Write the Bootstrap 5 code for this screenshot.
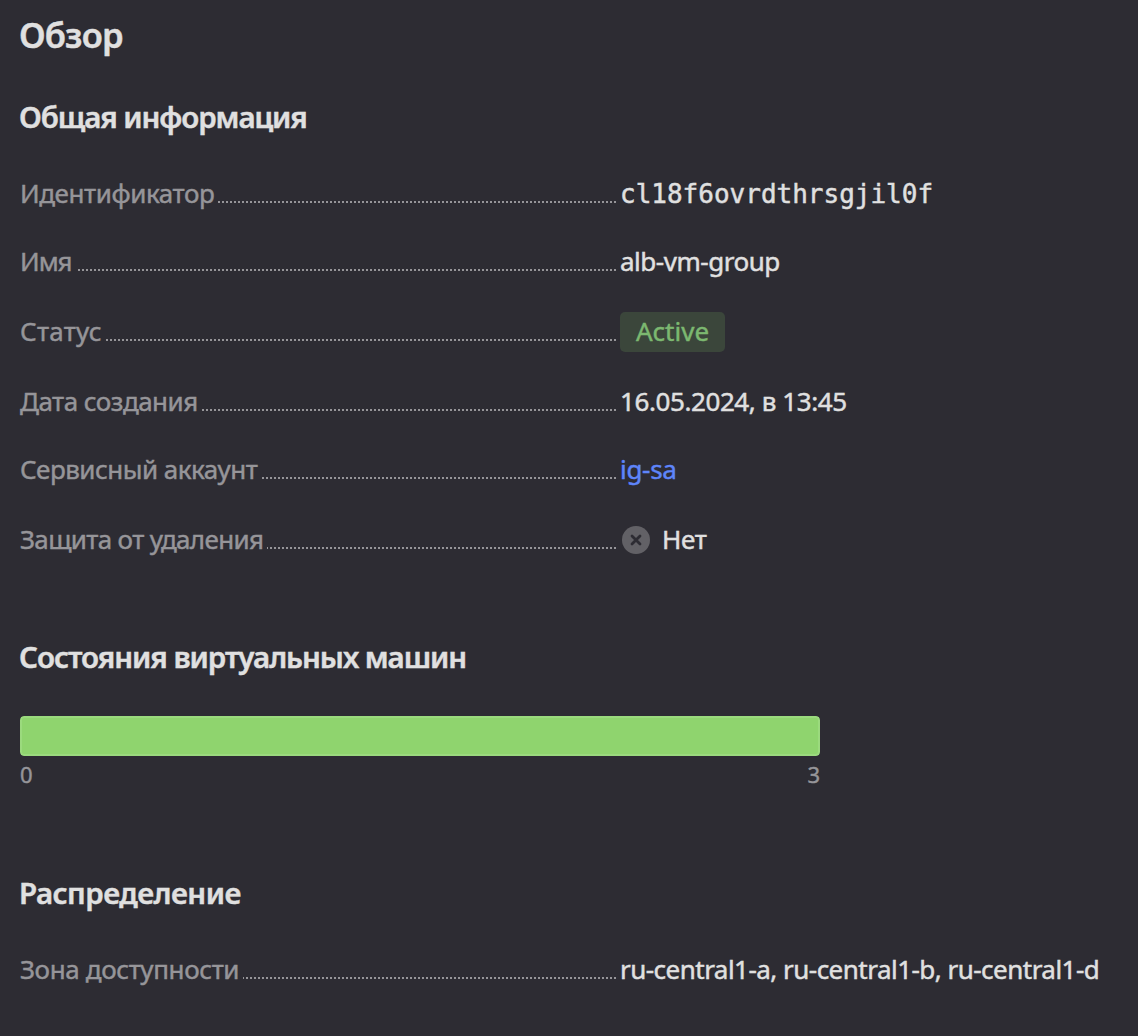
<!DOCTYPE html>
<html lang="ru">
<head>
<meta charset="utf-8">
<meta name="viewport" content="width=device-width, initial-scale=1">
<title>Обзор</title>
<link href="https://cdn.jsdelivr.net/npm/bootstrap@5.3.0/dist/css/bootstrap.min.css" rel="stylesheet">
<style>
body { background: #2d2c33; color: #e0e0e0; font-family: "Noto Sans", sans-serif; font-size: 26px; font-weight: 400; line-height: 36px; -webkit-text-stroke: .45px; }
.page { padding: 11px 20px 0; white-space: nowrap; }
.page-title { font-size: 34.5px; line-height: 48px; font-weight: 600; margin: 0 0 38px -1px; letter-spacing: -.85px; }
.section-title { font-size: 29.5px; line-height: 40px; font-weight: 600; margin: 0 0 38px -1px; }
.t-general { letter-spacing: -1.08px; }
.t-states { letter-spacing: -1.05px; margin-bottom: 39px; }
.t-distribution { letter-spacing: -.52px; }
.info-list { gap: 32px; }
.info-row { height: 36px; }
.info-row.tall { height: 40px; line-height: 40px; }
.info-term { width: 596px; margin-right: 4px; color: #969599; font-weight: 400; }
.leader { height: 2px; margin: 0 0 8px 4px; background: repeating-linear-gradient(to left, #969599 0 2px, transparent 2px 4px); }
.tall .leader { margin-bottom: 10px; }
.mono { font-family: "DejaVu Sans Mono", monospace; line-height: 38px; }
.status-label { height: 40px; line-height: 38px; margin-top: 1px; padding: 0 16px; border-radius: 5px; background: #3b463b; color: #7cb870; }
.sa-link { color: #5e85fa; }
.no-icon { width: 28px; height: 28px; margin: 7px 12px 0 2px; }
.k-id { letter-spacing: -.42px; }
.k-name { letter-spacing: -1px; }
.k-status { letter-spacing: .25px; }
.k-date { letter-spacing: -.53px; }
.k-account { letter-spacing: -.52px; }
.k-protect { letter-spacing: -.66px; }
.k-zone { letter-spacing: -.38px; }
.v-name { letter-spacing: -.48px; }
.v-date { letter-spacing: -.41px; }
.v-account { letter-spacing: -.3px; }
.v-no { letter-spacing: -.3px; }
.v-zones { letter-spacing: -.52px; }
.states { width: 800px; margin-bottom: 83px; }
.states .progress { height: 40px; border-radius: 4px; background: transparent; }
.states .progress-bar { background: #8fd46e; border: 2px solid #9bda7e; border-radius: 4px; }
.scale { margin: 3px 0 0; padding-bottom: 1px; font-size: 22px; line-height: 30px; color: #969599; }
.info-block { margin-bottom: 78px; }
</style>
</head>
<body>
<main class="page">
  <h1 class="page-title">Обзор</h1>

  <section class="info-block">
    <h2 class="section-title t-general">Общая информация</h2>
    <dl class="info-list d-flex flex-column mb-0">
      <div class="info-row d-flex">
        <dt class="info-term d-flex"><span class="k-id">Идентификатор</span><span class="leader flex-grow-1 align-self-end"></span></dt>
        <dd class="mono mb-0">cl18f6ovrdthrsgjil0f</dd>
      </div>
      <div class="info-row d-flex">
        <dt class="info-term d-flex"><span class="k-name">Имя</span><span class="leader flex-grow-1 align-self-end"></span></dt>
        <dd class="v-name mb-0">alb-vm-group</dd>
      </div>
      <div class="info-row tall d-flex">
        <dt class="info-term d-flex"><span class="k-status">Статус</span><span class="leader flex-grow-1 align-self-end"></span></dt>
        <dd class="status-label mb-0">Active</dd>
      </div>
      <div class="info-row d-flex">
        <dt class="info-term d-flex"><span class="k-date">Дата создания</span><span class="leader flex-grow-1 align-self-end"></span></dt>
        <dd class="v-date mb-0">16.05.2024, в 13:45</dd>
      </div>
      <div class="info-row d-flex">
        <dt class="info-term d-flex"><span class="k-account">Сервисный аккаунт</span><span class="leader flex-grow-1 align-self-end"></span></dt>
        <dd class="v-account mb-0"><a class="sa-link text-decoration-none" href="#">ig-sa</a></dd>
      </div>
      <div class="info-row tall d-flex">
        <dt class="info-term d-flex"><span class="k-protect">Защита от удаления</span><span class="leader flex-grow-1 align-self-end"></span></dt>
        <dd class="v-no d-flex mb-0">
          <svg class="no-icon" viewBox="0 0 28 28" aria-hidden="true"><circle cx="14" cy="14" r="14" fill="#626166"/><path d="M10 10l8 8M18 10l-8 8" fill="none" stroke="#2d2c33" stroke-width="2.8" stroke-linecap="round"/></svg>
          <span>Нет</span>
        </dd>
      </div>
    </dl>
  </section>

  <section>
    <h2 class="section-title t-states">Состояния виртуальных машин</h2>
    <div class="states">
      <div class="progress" role="progressbar" aria-valuenow="3" aria-valuemin="0" aria-valuemax="3">
        <div class="progress-bar" style="width: 100%"></div>
      </div>
      <div class="scale d-flex justify-content-between"><span>0</span><span>3</span></div>
    </div>
  </section>

  <section>
    <h2 class="section-title t-distribution">Распределение</h2>
    <dl class="info-list d-flex flex-column mb-0">
      <div class="info-row d-flex">
        <dt class="info-term d-flex"><span class="k-zone">Зона доступности</span><span class="leader flex-grow-1 align-self-end"></span></dt>
        <dd class="v-zones mb-0">ru-central1-a, ru-central1-b, ru-central1-d</dd>
      </div>
    </dl>
  </section>
</main>
<script src="https://cdn.jsdelivr.net/npm/bootstrap@5.3.0/dist/js/bootstrap.bundle.min.js"></script>
</body>
</html>
